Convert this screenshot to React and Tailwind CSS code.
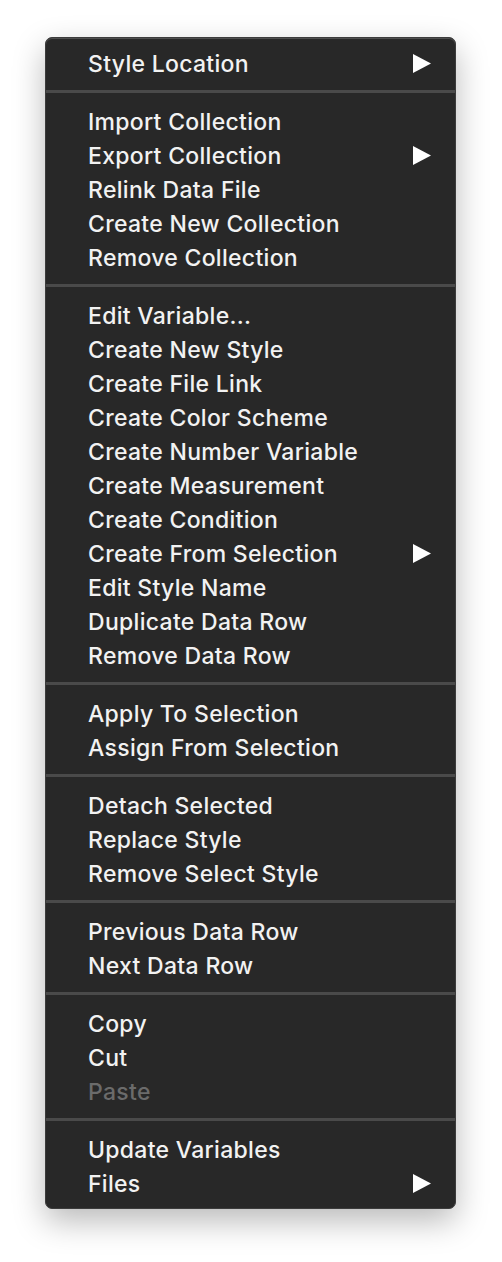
import React from "react";

const groups = [
  [{ label: "Style Location", sub: true }],
  [
    { label: "Import Collection" },
    { label: "Export Collection", sub: true },
    { label: "Relink Data File" },
    { label: "Create New Collection" },
    { label: "Remove Collection" },
  ],
  [
    { label: "Edit Variable..." },
    { label: "Create New Style" },
    { label: "Create File Link" },
    { label: "Create Color Scheme" },
    { label: "Create Number Variable" },
    { label: "Create Measurement" },
    { label: "Create Condition" },
    { label: "Create From Selection", sub: true },
    { label: "Edit Style Name" },
    { label: "Duplicate Data Row" },
    { label: "Remove Data Row" },
  ],
  [{ label: "Apply To Selection" }, { label: "Assign From Selection" }],
  [{ label: "Detach Selected" }, { label: "Replace Style" }, { label: "Remove Select Style" }],
  [{ label: "Previous Data Row" }, { label: "Next Data Row" }],
  [{ label: "Copy" }, { label: "Cut" }, { label: "Paste", disabled: true }],
  [{ label: "Update Variables" }, { label: "Files", sub: true }],
];

function Arrow() {
  return (
    <svg width="18" height="19" viewBox="0 0 18 19" className="shrink-0">
      <polygon points="0,0 18,9.5 0,19" fill="#ffffff" />
    </svg>
  );
}

function Item({ item }) {
  return (
    <div className="flex h-[34px] items-center justify-between pl-[42px] pr-[24px]">
      <span className={item.disabled ? "pt-[2px] text-[#6b6b6b]" : "pt-[2px] text-[#f2f2f2]"}>{item.label}</span>
      {item.sub && <Arrow />}
    </div>
  );
}

export default function App() {
  return (
    <div className="min-h-screen bg-white pl-[45px] pt-[37px]" style={{ fontFamily: "Inter, 'Noto Sans', sans-serif" }}>
      <div className="w-[411px] overflow-hidden rounded-[7px] border border-[#3c3c3c] bg-[#282828] py-2 text-[23px] font-medium leading-none tracking-[0.3px] shadow-[0_12px_32px_rgba(0,0,0,0.28),inset_0_1px_0_#4e4e4e]">
        {groups.map((g, gi) => (
          <div key={gi}>
            {gi > 0 && (
              <div className="pt-[10px] pb-[11px]">
                <div className="h-[3px] bg-[#4a4a4a]" />
              </div>
            )}
            {g.map((item) => (
              <Item key={item.label} item={item} />
            ))}
          </div>
        ))}
      </div>
    </div>
  );
}
